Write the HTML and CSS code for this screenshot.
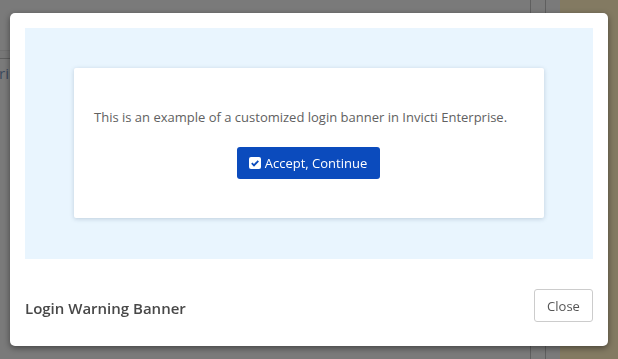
FILE: index.html
```html
<!DOCTYPE html>
<html lang="en">
<head>
  <meta charset="UTF-8" />
  <title>Login Warning Banner</title>
  <link rel="stylesheet" href="styles.css">
</head>
<body>
  <div class="page">
    <div class="page-side">
      <div class="side-rule"></div>
      <div class="side-label">ri</div>
    </div>
    <div class="page-main"></div>
    <div class="page-col"></div>
    <div class="page-col"></div>
    <div class="page-panel"></div>
  </div>

  <div class="modal">
    <div class="modal-body">
      <div class="banner-card">
        <p class="banner-text">This is an example of a customized login banner in Invicti Enterprise.</p>
        <button class="btn btn-accept">
          <svg class="check-icon" viewBox="0 0 12 12" width="12" height="12">
            <rect x="0" y="0" width="12" height="12" rx="2" fill="#fff"/>
            <path d="M2.8 6.2 L5 8.4 L9.3 3.8" fill="none" stroke="#0b4bbd" stroke-width="1.8"/>
          </svg>
          Accept, Continue
        </button>
      </div>
    </div>
    <div class="modal-footer">
      <h2 class="modal-title">Login Warning Banner</h2>
      <button class="btn btn-close">Close</button>
    </div>
  </div>
</body>
</html>
```

FILE: styles.css
```css
* {
  margin: 0;
  padding: 0;
  box-sizing: border-box;
}

body {
  width: 618px;
  height: 359px;
  overflow: hidden;
  background: #7a7a7a;
  font-family: 'Open Sans', 'Noto Sans', sans-serif;
}

/* dimmed page behind the dialog */
.page {
  display: flex;
  height: 100%;
}

.page-side {
  width: 24px;
  padding-top: 50px;
}

.side-rule {
  height: 9px;
  border-top: 1px solid #707070;
  border-bottom: 1px solid #5e5e5e;
  background: #777;
}

.side-label {
  margin-top: 4px;
  font-size: 15px;
  color: #3c4a5e;
  margin-left: -1px;
}

.page-main {
  width: 506px;
}

.page-col {
  width: 15px;
  border-left: 1px solid #5f5f5f;
}

.page-panel {
  flex: 1;
  background: #837a62;
}

/* dialog */
.modal {
  position: fixed;
  left: 10px;
  top: 13px;
  width: 598px;
  height: 333px;
  background: #fff;
  border-radius: 5px;
  box-shadow: 0 2px 6px rgba(0, 0, 0, 0.45);
  padding: 15px 15px 0;
}

.modal-body {
  background: #e9f5fe;
  height: 231px;
  padding: 40px 49px 41px;
}

.banner-card {
  background: #fff;
  height: 150px;
  border-radius: 2px;
  box-shadow: 0 1px 4px rgba(60, 90, 120, 0.25);
  padding: 39px 20px 0;
  display: flex;
  flex-direction: column;
  align-items: center;
}

.banner-text {
  align-self: flex-start;
  font-size: 13px;
  line-height: 20px;
  color: #616161;
}

.btn {
  font-family: 'Open Sans', 'Noto Sans', sans-serif;
  font-size: 13px;
  border-radius: 3px;
  cursor: pointer;
}

.btn-accept {
  margin-top: 20px;
  margin-left: -2px;
  width: 143px;
  height: 32px;
  background: #0b4bbd;
  color: #fff;
  border: none;
  display: flex;
  align-items: center;
  justify-content: center;
  gap: 4px;
}

.check-icon {
  display: block;
}

.modal-footer {
  display: flex;
  justify-content: space-between;
  align-items: center;
  height: 87px;
  padding-top: 6px;
}

.modal-title {
  font-size: 15px;
  font-weight: 600;
  color: #484848;
  margin-top: 5px;
}

.btn-close {
  width: 59px;
  height: 33px;
  background: #fff;
  color: #555;
  border: 1px solid #ccc;
}
```
